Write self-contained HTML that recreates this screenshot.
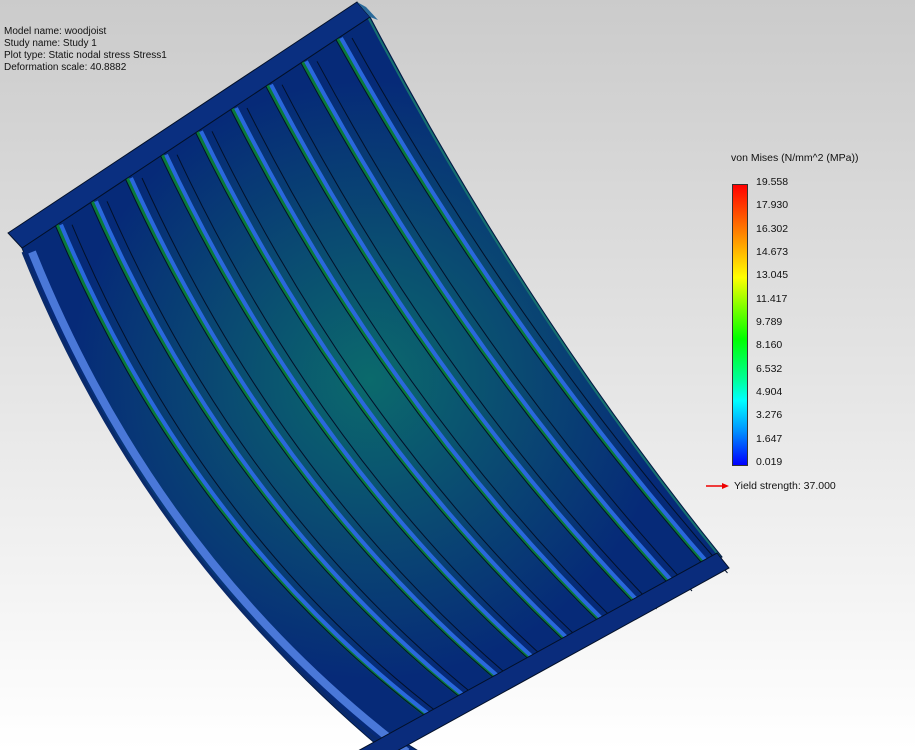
<!DOCTYPE html>
<html><head><meta charset="utf-8"><style>
html,body{margin:0;padding:0}
body{width:915px;height:750px;overflow:hidden;position:relative;background:linear-gradient(#cbcbcb 0%,#e2e2e2 45%,#ffffff 100%);font-family:"Liberation Sans",Arial,sans-serif;}
.info{position:absolute;left:4px;top:26px;font-size:10px;line-height:12px;color:#111}
.t{position:absolute;font-size:10.5px;color:#111;line-height:12px}
.bar{position:absolute;left:732px;top:184px;width:16px;height:282px;border:1px solid #333;box-sizing:border-box;
background:linear-gradient(#ff0000 0%,#ff7a00 16%,#ffff00 33%,#6fff00 45%,#00ff00 55%,#00ffa0 70%,#00ffff 77%,#0090ff 88%,#0000ff 100%)}
</style></head><body>
<svg width="915" height="750" style="position:absolute;left:0;top:0">
<defs>
<radialGradient id="g" cx="370" cy="380" r="300" gradientUnits="userSpaceOnUse">
<stop offset="0" stop-color="#0b6a6c"/><stop offset="0.5" stop-color="#0a4a72"/><stop offset="1" stop-color="#062a78"/>
</radialGradient>
<g id="r">
<path d="M57,224.7 Q186.75,532.45 428.5,717"/>
<path d="M92,201.3 Q226,507.4 464,699"/>
<path d="M127,178 Q265.25,482.3 499.5,681"/>
<path d="M162,154.7 Q304.5,457.3 535,663"/>
<path d="M197,131.3 Q343.75,432.2 570.5,645"/>
<path d="M232,108 Q383,407.1 606,627"/>
<path d="M267,84.7 Q422.25,382.1 641.5,609"/>
<path d="M302,61.3 Q461.5,357 677,591"/>
<path d="M337,38 Q500.75,331.9 712.5,573"/>
</g>
</defs>
<path d="M22,248 L370,17 Q524,311 722,557 L393,735 L420,752 L395,760 Q147.5,557.5 22,248 Z" fill="url(#g)" stroke="#041a40" stroke-width="1"/>
<path d="M368,17 Q522,311 720,557" fill="none" stroke="#167070" stroke-width="2"/>
<path d="M32,252 Q157,562 407,752" fill="none" stroke="#4a78d8" stroke-width="8"/>
<path d="M23,252 Q148,562 396,755" fill="none" stroke="#0a2a6a" stroke-width="3"/>
<g fill="none">
<use href="#r" stroke="#0a7a3a" stroke-width="4"/>
<use href="#r" stroke="#2a68dc" stroke-width="4" transform="translate(4,0)"/>
<use href="#r" stroke="#031028" stroke-width="1" transform="translate(-2,0)"/>
<use href="#r" stroke="#031028" stroke-width="1" transform="translate(15,0)"/>
</g>
<polygon points="8,233 357,2 370,17 22,248" fill="#0a2f80" stroke="#031028" stroke-width="1"/>
<polygon points="357,2 366,7 378,20 370,17" fill="#2a6a9a"/>
<polygon points="717,553 729,568 395,752 356,752" fill="#0a2c7c" stroke="#031028" stroke-width="1"/>
<path d="M706,486 H722" stroke="#e00" stroke-width="1.5"/><polygon points="722,483 729,486 722,489" fill="#e00"/>
</svg>
<div class="info">Model name: woodjoist<br>Study name: Study 1<br>Plot type: Static nodal stress Stress1<br>Deformation scale: 40.8882</div>
<div class="t" style="left:731px;top:152px">von Mises (N/mm^2 (MPa))</div>
<div class="bar"></div>
<div class="t" style="left:756px;top:176px">19.558</div>
<div class="t" style="left:756px;top:199px">17.930</div>
<div class="t" style="left:756px;top:223px">16.302</div>
<div class="t" style="left:756px;top:246px">14.673</div>
<div class="t" style="left:756px;top:269px">13.045</div>
<div class="t" style="left:756px;top:293px">11.417</div>
<div class="t" style="left:756px;top:316px">9.789</div>
<div class="t" style="left:756px;top:339px">8.160</div>
<div class="t" style="left:756px;top:363px">6.532</div>
<div class="t" style="left:756px;top:386px">4.904</div>
<div class="t" style="left:756px;top:409px">3.276</div>
<div class="t" style="left:756px;top:433px">1.647</div>
<div class="t" style="left:756px;top:456px">0.019</div>
<div class="t" style="left:734px;top:480px">Yield strength: 37.000</div>
</body></html>
